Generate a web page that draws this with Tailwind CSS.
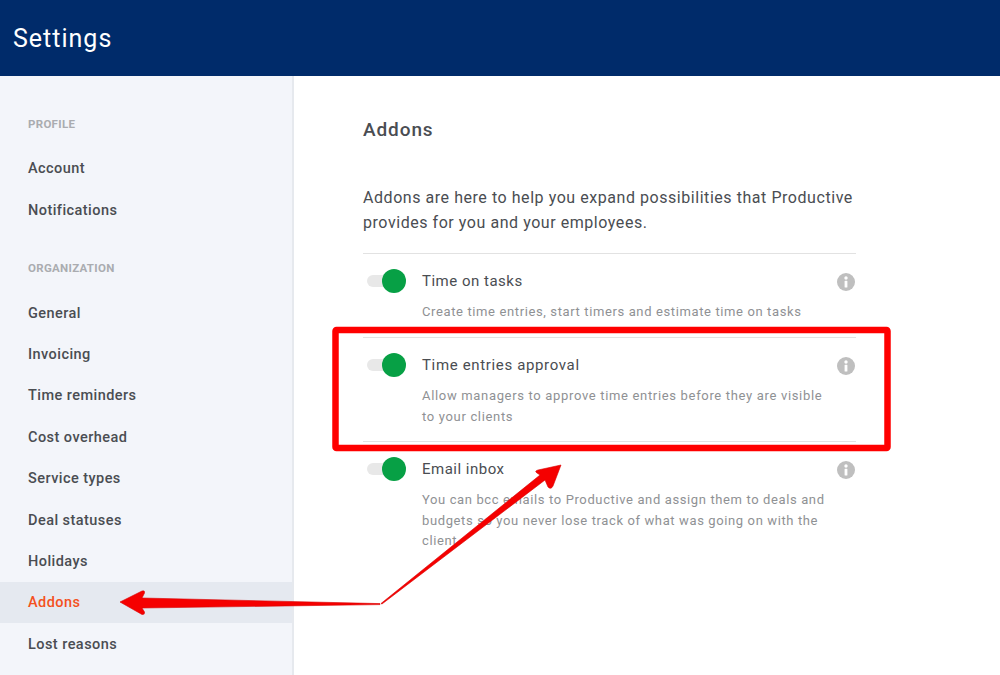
<!DOCTYPE html>
<html lang="en">
<head>
    <meta charset="UTF-8">
    <meta name="viewport" content="width=device-width, initial-scale=1.0">
    <title>Settings</title>
    <script src="https://cdn.jsdelivr.net/npm/@tailwindcss/browser@4"></script>
</head>
<body class="relative w-[1000px] h-[675px] overflow-hidden bg-white font-['Roboto',sans-serif]">

    <header class="h-[76px] bg-[#002b6a] flex items-center pl-[13px] pt-[2px]">
        <h1 class="text-[25px] text-white tracking-[1px]">Settings</h1>
    </header>

    <div class="flex h-[599px]">
        <!-- sidebar -->
        <nav class="w-[294px] shrink-0 bg-[#f3f5fa] border-r-2 border-[#e6e9ee] pt-[41px] text-[14.5px] font-medium text-[#4a4d52] tracking-[0.45px]">
            <h2 class="pl-[28px] h-[14px] leading-[14px] text-[11.5px] font-bold text-[#aaacb0] tracking-[0.3px]">PROFILE</h2>
            <ul class="mt-[17px] pt-[0.5px]">
                <li class="pl-[28px] h-[41.4px] flex items-center">Account</li>
                <li class="pl-[28px] h-[41.4px] flex items-center">Notifications</li>
            </ul>
            <h2 class="mt-[30px] pl-[28px] h-[14px] leading-[14px] text-[11.5px] font-bold text-[#aaacb0] tracking-[0.3px]">ORGANIZATION</h2>
            <ul class="mt-[17px]">
                <li class="pl-[28px] h-[41.4px] flex items-center pt-[1px]">General</li>
                <li class="pl-[28px] h-[41.4px] flex items-center pt-[1px]">Invoicing</li>
                <li class="pl-[28px] h-[41.4px] flex items-center pt-[1px]">Time reminders</li>
                <li class="pl-[28px] h-[41.4px] flex items-center pt-[1px]">Cost overhead</li>
                <li class="pl-[28px] h-[41.4px] flex items-center pt-[1px]">Service types</li>
                <li class="pl-[28px] h-[41.4px] flex items-center pt-[1px]">Deal statuses</li>
                <li class="pl-[28px] h-[41.4px] flex items-center pt-[1px]">Holidays</li>
                <li class="pl-[28px] h-[41.4px] flex items-center pt-[1px] bg-[#e5e9f0] text-[#f4511e]">Addons</li>
                <li class="pl-[28px] h-[41.4px] flex items-center pt-[1px]">Lost reasons</li>
            </ul>
        </nav>

        <!-- content -->
        <main class="w-[562px] pl-[69px] text-[#4a4d52]">
            <h2 class="mt-[42px] h-[24px] leading-[24px] text-[19px] font-medium tracking-[0.9px]">Addons</h2>
            <p class="mt-[43px] w-[493px] text-[16px] leading-[25px] tracking-[0.55px]">Addons are here to help you expand possibilities that Productive provides for you and your employees.</p>

            <div class="mt-[18px] border-t border-[#e2e2e2] h-[84px] flex pt-[15px]">
                <div class="w-[59px] shrink-0 pl-[3px]">
                    <div class="relative w-[40px] h-[24px] flex items-center">
                        <span class="w-[28px] h-[12px] ml-[1px] rounded-full bg-[#e8e8e8]"></span>
                        <span class="absolute right-0 top-0 w-[24px] h-[24px] rounded-full bg-[#07a045]"></span>
                    </div>
                </div>
                <div class="flex-1">
                    <h3 class="h-[24px] leading-[24px] text-[15px] tracking-[0.5px]">Time on tasks</h3>
                    <p class="mt-[9px] text-[13px] leading-[20.5px] text-[#8f9194] tracking-[0.62px]">Create time entries, start timers and estimate time on tasks</p>
                </div>
                <svg class="w-[18px] h-[18px] mt-[4px] shrink-0 mr-[1px]" viewBox="0 0 18 18"><circle cx="9" cy="9" r="9" fill="#bfbfbf"/><circle cx="9" cy="5" r="1.7" fill="#fff"/><rect x="7.6" y="7.8" width="2.8" height="6.8" rx="0.6" fill="#fff"/></svg>
            </div>

            <div class="border-t border-[#e2e2e2] h-[104px] flex pt-[15px]">
                <div class="w-[59px] shrink-0 pl-[3px]">
                    <div class="relative w-[40px] h-[24px] flex items-center">
                        <span class="w-[28px] h-[12px] ml-[1px] rounded-full bg-[#e8e8e8]"></span>
                        <span class="absolute right-0 top-0 w-[24px] h-[24px] rounded-full bg-[#07a045]"></span>
                    </div>
                </div>
                <div class="flex-1 pr-[12px]">
                    <h3 class="h-[24px] leading-[24px] text-[15px] tracking-[0.65px]">Time entries approval</h3>
                    <p class="mt-[9px] text-[13px] leading-[20.5px] text-[#8f9194] tracking-[0.67px]">Allow managers to approve time entries before they are visible to your clients</p>
                </div>
                <svg class="w-[18px] h-[18px] mt-[4px] shrink-0 mr-[1px]" viewBox="0 0 18 18"><circle cx="9" cy="9" r="9" fill="#bfbfbf"/><circle cx="9" cy="5" r="1.7" fill="#fff"/><rect x="7.6" y="7.8" width="2.8" height="6.8" rx="0.6" fill="#fff"/></svg>
            </div>

            <div class="border-t border-[#e2e2e2] flex pt-[15px]">
                <div class="w-[59px] shrink-0 pl-[3px]">
                    <div class="relative w-[40px] h-[24px] flex items-center">
                        <span class="w-[28px] h-[12px] ml-[1px] rounded-full bg-[#e8e8e8]"></span>
                        <span class="absolute right-0 top-0 w-[24px] h-[24px] rounded-full bg-[#07a045]"></span>
                    </div>
                </div>
                <div class="flex-1 pr-[12px]">
                    <h3 class="h-[24px] leading-[24px] text-[15px] tracking-[0.5px]">Email inbox</h3>
                    <p class="mt-[9px] text-[13px] leading-[20.5px] text-[#8f9194] tracking-[0.62px]">You can bcc emails to Productive and assign them to deals and budgets so you never lose track of what was going on with the client.</p>
                </div>
                <svg class="w-[18px] h-[18px] mt-[4px] shrink-0 mr-[1px]" viewBox="0 0 18 18"><circle cx="9" cy="9" r="9" fill="#bfbfbf"/><circle cx="9" cy="5" r="1.7" fill="#fff"/><rect x="7.6" y="7.8" width="2.8" height="6.8" rx="0.6" fill="#fff"/></svg>
            </div>
        </main>
    </div>

    <!-- screenshot annotations on top of the page -->
    <svg class="absolute left-0 top-0 w-[1000px] h-[675px] pointer-events-none" viewBox="0 0 1000 675">
        <rect x="335.5" y="330" width="552" height="118" rx="1" fill="none" stroke="#ff0000" stroke-width="6.5"/>
        <path d="M120 602 L142 591 Q145 590 144.5 593 L142 598 L380 603.6 L380 604.6 L142 608 L144.5 612 Q145 615 142 614.5 Z" fill="#f50000" stroke="#d80000" stroke-width="0.6" stroke-linejoin="round"/>
        <path d="M561 465 L553 486 Q551 490 548 487 L545 480 L382 604 L381 603.5 L540 475 L537 473 Q534 471 538 470 Z" fill="#f50000" stroke="#d80000" stroke-width="0.6" stroke-linejoin="round"/>
    </svg>

</body>
</html>
